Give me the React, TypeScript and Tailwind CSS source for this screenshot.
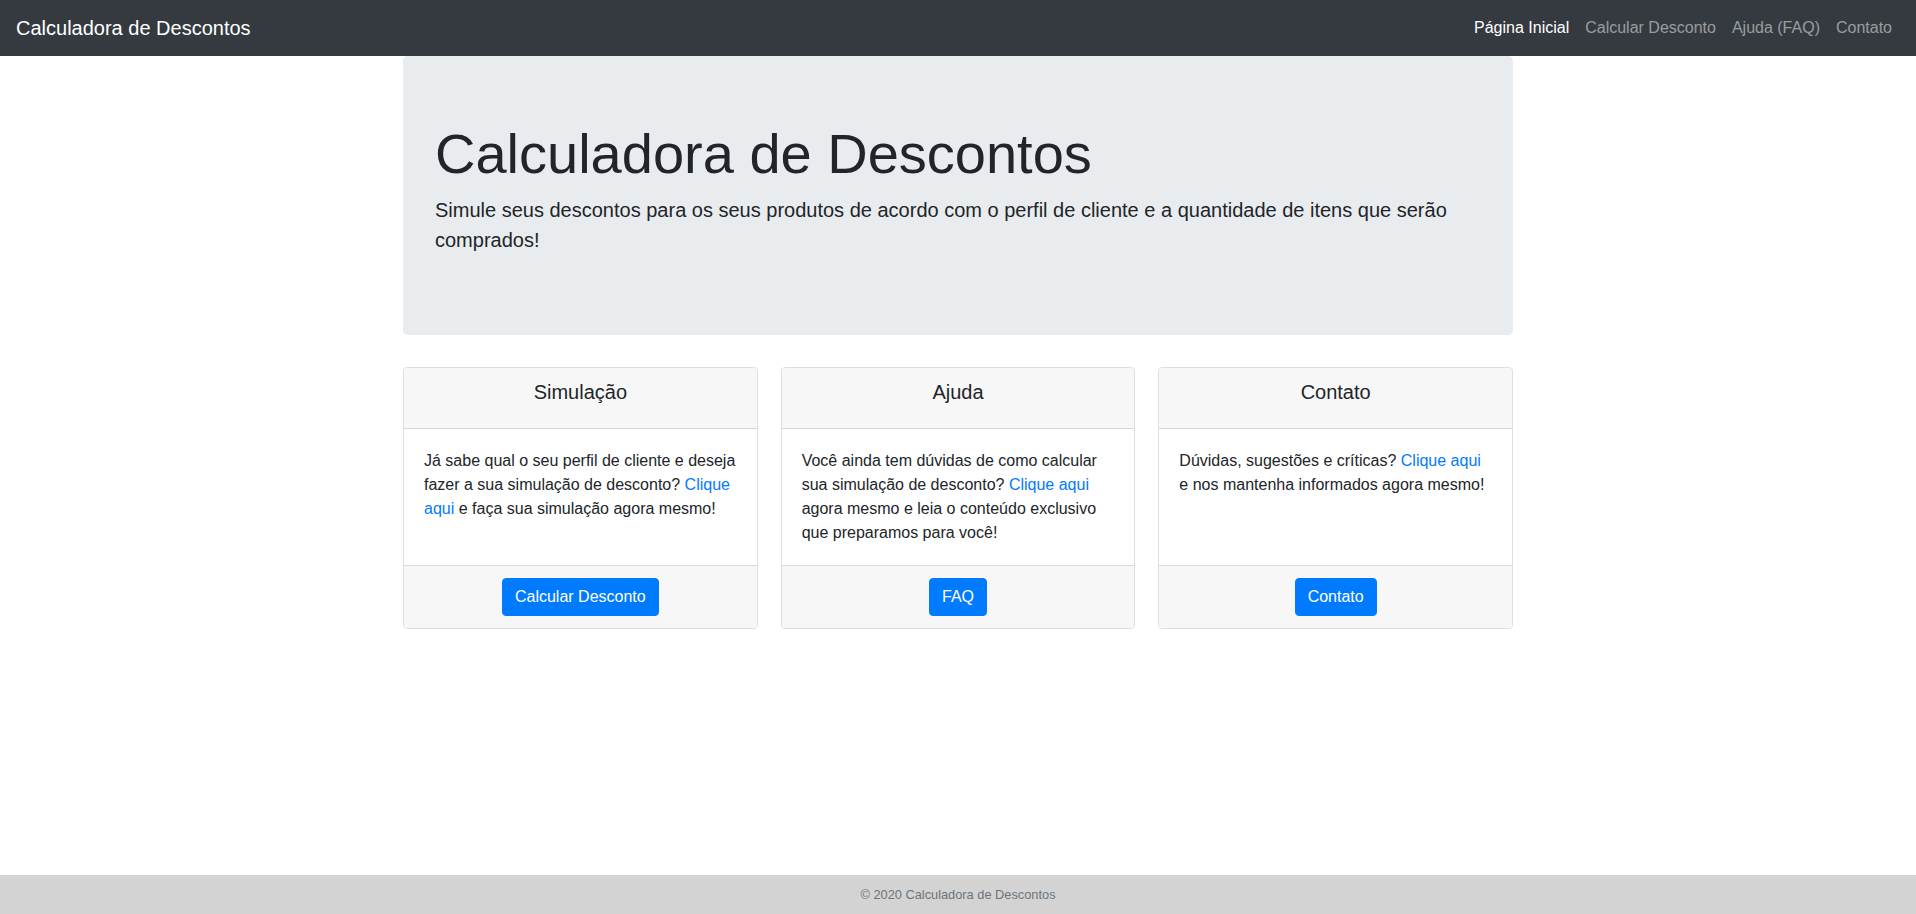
import React from "react";

const cards = [
  {
    title: "Simulação",
    body: (
      <>
        Já sabe qual o seu perfil de cliente e deseja fazer a sua simulação de desconto?{" "}
        <a href="#" className="text-[#007bff]">Clique aqui</a> e faça sua simulação agora mesmo!
      </>
    ),
    btn: "Calcular Desconto",
  },
  {
    title: "Ajuda",
    body: (
      <>
        Você ainda tem dúvidas de como calcular sua simulação de desconto?{" "}
        <a href="#" className="text-[#007bff]">Clique aqui</a> agora mesmo e leia o conteúdo exclusivo que preparamos para você!
      </>
    ),
    btn: "FAQ",
  },
  {
    title: "Contato",
    body: (
      <>
        Dúvidas, sugestões e críticas?{" "}
        <a href="#" className="text-[#007bff]">Clique aqui</a> e nos mantenha informados agora mesmo!
      </>
    ),
    btn: "Contato",
  },
];

export default function App() {
  return (
    <div
      className="min-h-screen flex flex-col bg-white text-[#212529] text-[16px] leading-6"
      style={{ fontFamily: '"Liberation Sans", Arial, sans-serif' }}
    >
      <nav className="h-[56px] bg-[#343a40] flex items-center justify-between px-4">
        <a href="#" className="text-white text-[20px] leading-[30px]">Calculadora de Descontos</a>
        <div className="flex items-center">
          <a href="#" className="px-2 text-white">Página Inicial</a>
          <a href="#" className="px-2 text-white/50">Calcular Desconto</a>
          <a href="#" className="px-2 text-white/50">Ajuda (FAQ)</a>
          <a href="#" className="px-2 text-white/50">Contato</a>
        </div>
      </nav>

      <main className="w-[1110px] mx-auto">
        <section className="bg-[#e9ecef] rounded-[5px] px-8 py-16 mb-8">
          <h1 className="text-[56px] leading-[1.2] font-light mb-2">Calculadora de Descontos</h1>
          <p className="text-[20px] leading-[30px] font-light mb-4">
            Simule seus descontos para os seus produtos de acordo com o perfil de cliente e a quantidade de itens que serão comprados!
          </p>
        </section>

        <div className="grid grid-cols-3 gap-[23px]">
          {cards.map((c) => (
            <div key={c.title} className="flex flex-col border border-black/[0.125] rounded-[4px] overflow-hidden">
              <div className="h-[61px] bg-[#f7f7f7] border-b border-black/[0.125] pt-3 text-center">
                <h5 className="text-[20px] leading-6">{c.title}</h5>
              </div>
              <div className="flex-1 p-5">
                <p>{c.body}</p>
              </div>
              <div className="bg-[#f7f7f7] border-t border-black/[0.125] py-3 flex justify-center">
                <button className="bg-[#007bff] text-white rounded-[4px] px-3 py-[6px] leading-6 border border-[#007bff]">
                  {c.btn}
                </button>
              </div>
            </div>
          ))}
        </div>
      </main>

      <footer className="mt-auto h-[39px] bg-[#d3d3d3] flex items-center justify-center text-[12.8px] text-[#6c757d]">
        © 2020 Calculadora de Descontos
      </footer>
    </div>
  );
}
